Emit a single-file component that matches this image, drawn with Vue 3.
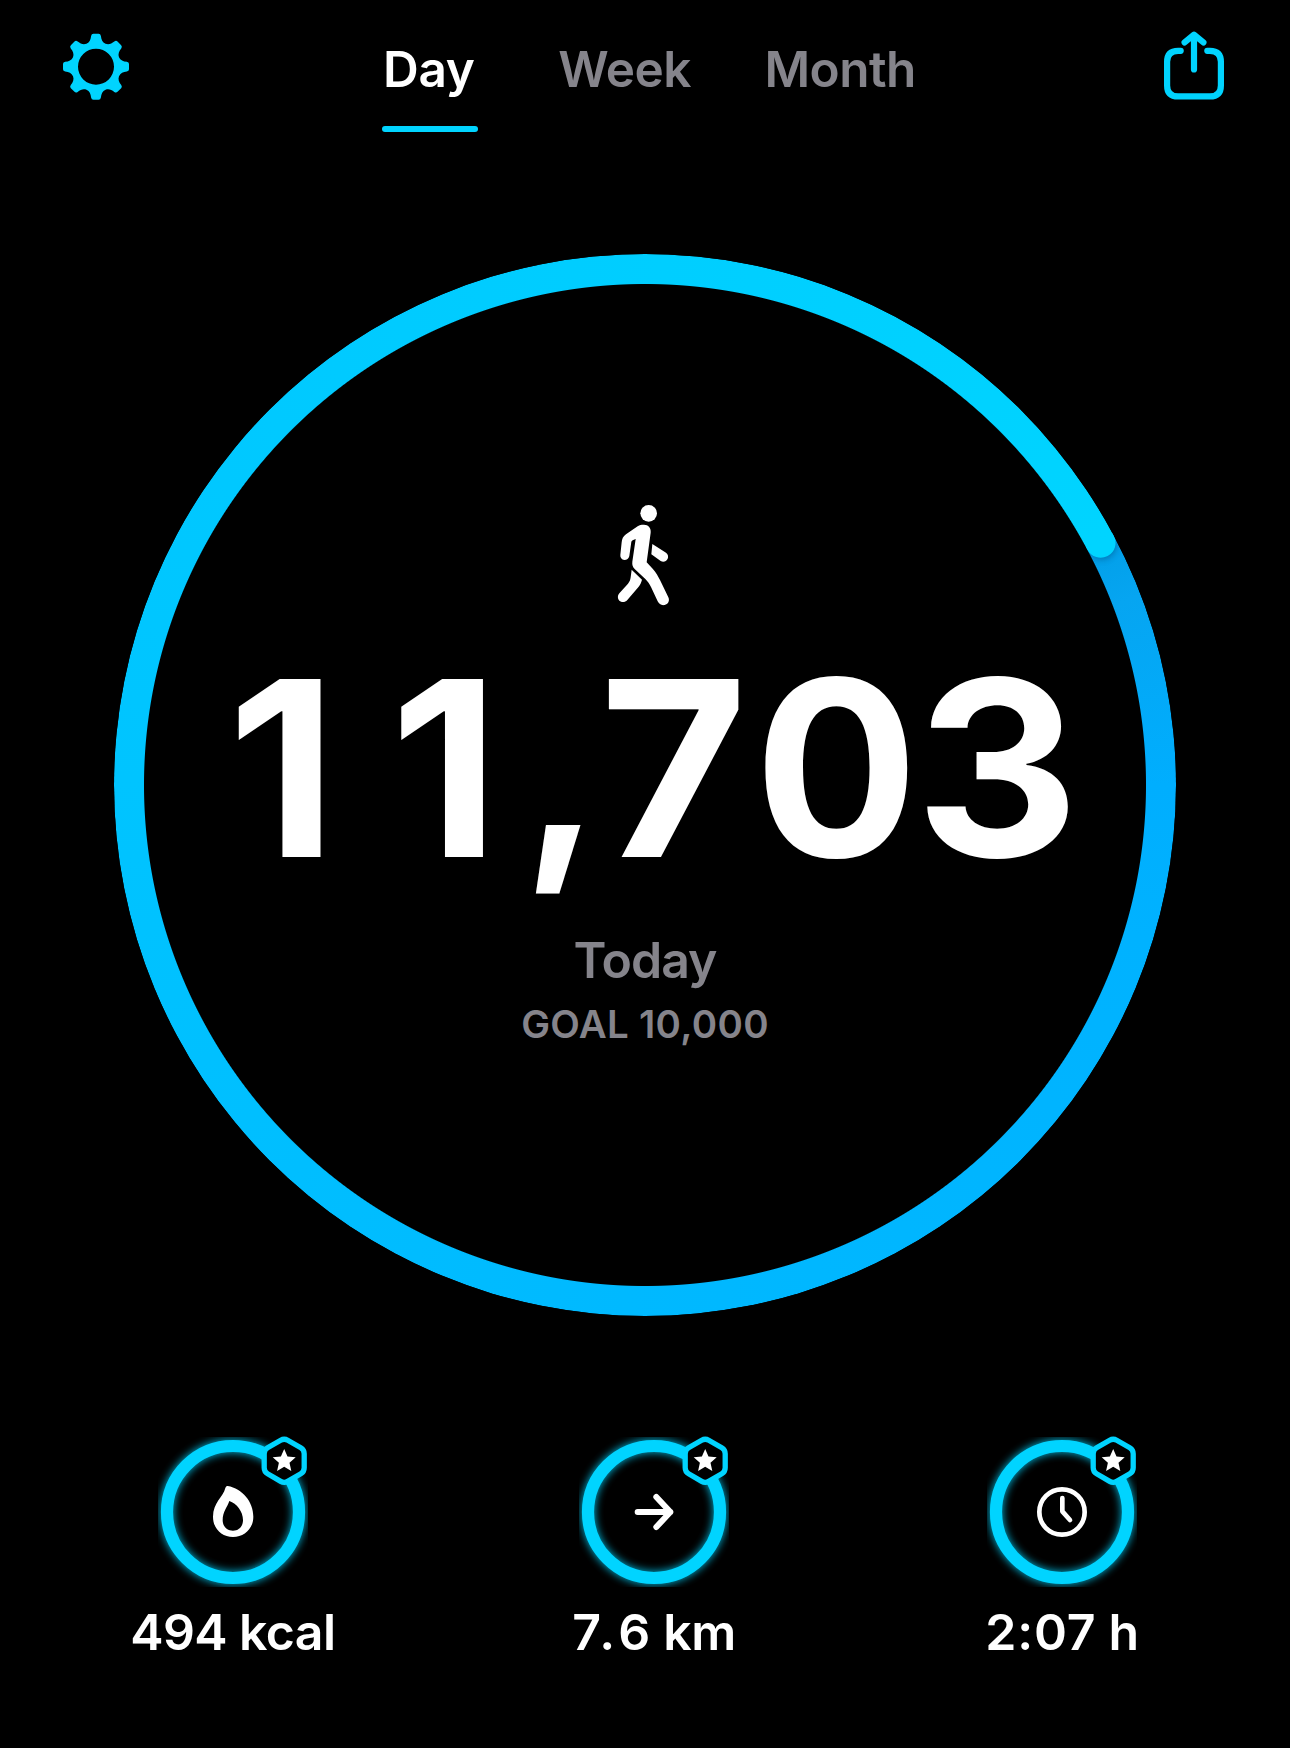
<script setup>
const tabs = [
  { label: 'Day', active: true },
  { label: 'Week', active: false },
  { label: 'Month', active: false },
]

const steps = '11,703'

const stats = [
  { icon: 'flame', amount: '494', unit: 'kcal' },
  { icon: 'arrow', amount: '7.6', unit: 'km' },
  { icon: 'clock', amount: '2:07', unit: 'h' },
]

// Gear outline: one tooth, repeated every 45 degrees around the centre.
function gearPath() {
  const valley = [9.5, -23]
  const tooth = [
    ['C', [-6.4, -24.4], [-5.3, -27.2], [-4.9, -30.8]],
    ['Q', [-4.5, -33], [-2.6, -33]],
    ['L', [2.6, -33]],
    ['Q', [4.5, -33], [4.9, -30.8]],
    ['C', [5.3, -27.2], [6.4, -24.4], valley],
  ]
  let d = 'M-9.5 -23'
  for (let i = 0; i < 8; i++) {
    const a = (i * Math.PI) / 4
    for (const [cmd, ...pts] of tooth) {
      d += cmd + pts
        .map(([x, y]) => `${(x * Math.cos(a) - y * Math.sin(a)).toFixed(2)} ${(x * Math.sin(a) + y * Math.cos(a)).toFixed(2)}`)
        .join(' ')
    }
  }
  return d + 'ZM18 0A18 18 0 1 0 -18 0A18 18 0 1 0 18 0Z'
}
const gear = gearPath()

function glyphClass(ch) {
  if (ch === ',') return 'comma'
  return ch === '1' ? 'digit one' : 'digit'
}
</script>

<template>
  <main class="screen">
    <header class="topbar">
      <button class="icon-btn" aria-label="Settings">
        <svg width="68" height="68" viewBox="-34 -33.7 68 68"><path :d="gear" fill="#00d4ff" fill-rule="evenodd" /></svg>
      </button>
      <nav class="tabs">
        <a v-for="t in tabs" :key="t.label" class="tab" :class="{ active: t.active }">{{ t.label }}</a>
      </nav>
      <button class="icon-btn share" aria-label="Share">
        <svg width="60" height="70" viewBox="0 0 60 70" fill="none" stroke="#00d4ff" stroke-width="6.2" stroke-linecap="round" stroke-linejoin="round">
          <path d="M16.7 20.8H14.1Q3.1 20.8 3.1 31.8V55.4Q3.1 66.4 14.1 66.4H45.9Q56.9 66.4 56.9 55.4V31.8Q56.9 20.8 45.9 20.8H43.3" />
          <path d="M30 39.5V5.5M20.6 12.4L30 4.6L39.4 12.4" />
        </svg>
      </button>
    </header>

    <section class="dial">
      <div class="track"></div>
      <svg class="cap" width="1062" height="1062" viewBox="-531 -531 1062 1062">
        <defs>
          <clipPath id="band"><path clip-rule="evenodd" d="M531 0A531 531 0 1 0 -531 0A531 531 0 1 0 531 0ZM501 0A501 501 0 1 0 -501 0A501 501 0 1 0 501 0Z" /></clipPath>
          <clipPath id="ahead"><rect x="0" y="-545" width="60" height="60" /></clipPath>
          <filter id="soft" x="-100%" y="-100%" width="300%" height="300%"><feGaussianBlur stdDeviation="3" /></filter>
        </defs>
        <g clip-path="url(#band)">
          <g transform="rotate(62)">
            <g clip-path="url(#ahead)">
              <path d="M-13 -531H2A15 15 0 0 1 2 -501H-13Z" fill="#003a66" opacity=".4" filter="url(#soft)" />
            </g>
            <path d="M-3 -531H0A15 15 0 0 1 0 -501H-3Z" fill="#00d4ff" />
          </g>
        </g>
      </svg>
      <div class="readout">
        <svg class="walker" width="110" height="130" viewBox="0 0 330 390" fill="#fff">
          <circle cx="176" cy="70" r="25" />
          <path d="M160 104C174 103 184 113 182 128L170 217L188 236C198 247 204 258 210 270L235 322C240 333 234 343 224 345C214 347 207 342 203 334L183 291C178 281 174 275 166 267L134 237C128 231 126 224 127 215L137 147L128 151C125 153 124 155 123.500 159L118 198C116 206 111 210 103 210C95 209 90 203 91 195L95 157C96 147 99 139 108 133L143 109C149 105 154 104 160 104Z" />
          <path d="M187 162L228 188C234 192 236 200 233 206C229 215 220 217 212 213L184 193Z" />
          <path d="M125 239L156 269C153 279 151 284 146 290L112 330C105 338 95 338 88 332C82 326 82 317 88 310L114 281C119 275 121 270 122 262Z" />
        </svg>
        <div class="steps"><span v-for="(ch, i) in steps" :key="i" :class="glyphClass(ch)">{{ ch }}</span></div>
        <div class="today">Today</div>
        <div class="goal">GOAL 10,000</div>
      </div>
    </section>

    <section class="stats">
      <div v-for="s in stats" :key="s.icon" class="stat">
        <svg class="badge-ring" width="150" height="150" viewBox="-75 -75 150 150">
          <defs>
            <filter :id="'glow-' + s.icon" filterUnits="userSpaceOnUse" x="-75" y="-75" width="150" height="150">
              <feGaussianBlur stdDeviation="4" />
            </filter>
          </defs>
          <circle r="66" fill="none" stroke="#00d4ff" stroke-width="13" opacity=".85" :filter="`url(#glow-${s.icon})`" />
          <circle r="66" fill="none" stroke="#00d4ff" stroke-width="12.200" />
          <g transform="scale(.33333)" fill="none" stroke="#fff" stroke-linecap="round" stroke-linejoin="round">
            <path v-if="s.icon === 'flame'" stroke="none" fill="#fff" fill-rule="evenodd" d="M-16 -78Q-21 -79 -23 -72C-29 -46 -60 -28 -60 14C-60 50 -34 75 0 75C34 75 61 50 61 14C61 -31 28 -70 -16 -78ZM-11 -33C-17 -14 -31 -1 -31 25C-31 44 -17 56 0 56C18 56 30 43 30 24C30 -1 11 -26 -11 -33Z" />
            <path v-else-if="s.icon === 'arrow'" stroke-width="18" d="M-49 0H49M7 -45L49 0L7 45" />
            <template v-else>
              <circle r="68" stroke-width="14" />
              <path stroke-width="14" d="M1 -42V-2L24 24" />
            </template>
          </g>
          <g transform="translate(51.200 -51.200)">
            <path d="M-3.500 -20.600Q0 -22.600 3.500 -20.600L16.600 -13Q20 -11 20 -7V7Q20 11 16.600 13L3.500 20.600Q0 22.600 -3.500 20.600L-16.600 13Q-20 11 -20 7V-7Q-20 -11 -16.600 -13Z" fill="#000" stroke="#00d4ff" stroke-width="5.300" />
            <path d="M0 -11.800L3.300 -4.200L11.500 -3.500L5.300 2L7.100 10.300L0 6L-7.100 10.300L-5.300 2L-11.500 -3.500L-3.300 -4.200Z" fill="#fff" />
          </g>
        </svg>
        <div class="value" :class="s.icon"><span class="amount">{{ s.amount }}</span> {{ s.unit }}</div>
      </div>
    </section>
  </main>
</template>

<style>
body {
  background: #000;
}
</style>

<style scoped>
.screen {
  width: 1290px;
  height: 1748px;
  background: #000;
  color: #fff;
  font-family: Inter, "Liberation Sans", sans-serif;
  display: flex;
  flex-direction: column;
  overflow: hidden;
}
.topbar {
  height: 132px;
  display: flex;
  align-items: flex-start;
  justify-content: space-between;
  padding: 0 66px 0 62px;
}
.icon-btn {
  border: 0;
  padding: 0;
  background: none;
  line-height: 0;
  margin-top: 32.600px;
}
.icon-btn.share {
  margin-top: 30.400px;
}
.tabs {
  display: flex;
  height: 132px;
  margin-left: 8px;
}
.tab {
  box-sizing: border-box;
  height: 132px;
  padding: 39px 4px 0 0;
  border-bottom: 6px solid transparent;
  font-size: 49.500px;
  line-height: 60px;
  font-weight: 600;
  letter-spacing: -0.5px;
  color: #85848b;
  margin-right: 69.500px;
}
.tab:last-child {
  margin-right: 0;
}
.tab.active {
  color: #fff;
  padding-left: 1px;
  letter-spacing: -0.3px;
  margin-right: 79.500px;
  position: relative;
}
.tab.active::after {
  content: "";
  position: absolute;
  left: 0;
  right: 0.500px;
  bottom: -6px;
  height: 6px;
  border-radius: 3px;
  background: #00d4ff;
}
.dial {
  display: grid;
  width: 1062px;
  height: 1062px;
  margin: 122.400px auto 0;
}
.dial > * {
  grid-area: 1 / 1;
}
.track {
  border-radius: 50%;
  background: conic-gradient(from 62deg, #029fe8 0deg, #06a5f1 7deg, #00aefe 28deg, #00b2ff 45deg, #00b9ff 120deg, #00c3ff 200deg, #00cbff 270deg, #00d4ff 360deg);
  mask: radial-gradient(circle at center, transparent 500.500px, #000 501.500px);
}
.cap {
  position: relative;
}
.readout {
  display: flex;
  flex-direction: column;
  align-items: center;
}
.walker {
  margin-top: 235.600px;
}
.steps {
  display: flex;
  margin-top: 23px;
  margin-right: 7px;
  font-size: 245px;
  line-height: 250px;
  font-weight: 700;
  white-space: nowrap;
  transform: scaleX(1.04);
}
.digit {
  box-sizing: border-box;
  width: 156.400px;
  text-align: center;
  font-feature-settings: "tnum";
}
.one {
  padding-right: 4.600px;
  font-feature-settings: normal;
}
.comma {
  width: 57px;
  margin: 5px 9.500px 0 -6px;
  font-size: 226px;
  line-height: 240px;
}
.today {
  margin-top: 37px;
  font-size: 50px;
  line-height: 60px;
  font-weight: 600;
  letter-spacing: -1px;
  color: #85848b;
}
.goal {
  margin-top: 11px;
  font-size: 38.500px;
  line-height: 46px;
  font-weight: 600;
  letter-spacing: 0.3px;
  color: #85848b;
}
.stats {
  display: grid;
  grid-template-columns: 422px 420px 396px;
  padding-left: 22px;
  margin-top: 120.400px;
}
.stat {
  display: flex;
  flex-direction: column;
  align-items: center;
}
.badge-ring {
  display: block;
  overflow: visible;
}
.value {
  margin-top: 15px;
  font-size: 50px;
  line-height: 60px;
  font-weight: 600;
  letter-spacing: -0.5px;
  white-space: nowrap;
}
.flame .amount {
  letter-spacing: -0.7px;
}
.arrow .amount {
  letter-spacing: 4.500px;
  margin-right: -3.500px;
}
.clock .amount {
  letter-spacing: 0.8px;
}
</style>
